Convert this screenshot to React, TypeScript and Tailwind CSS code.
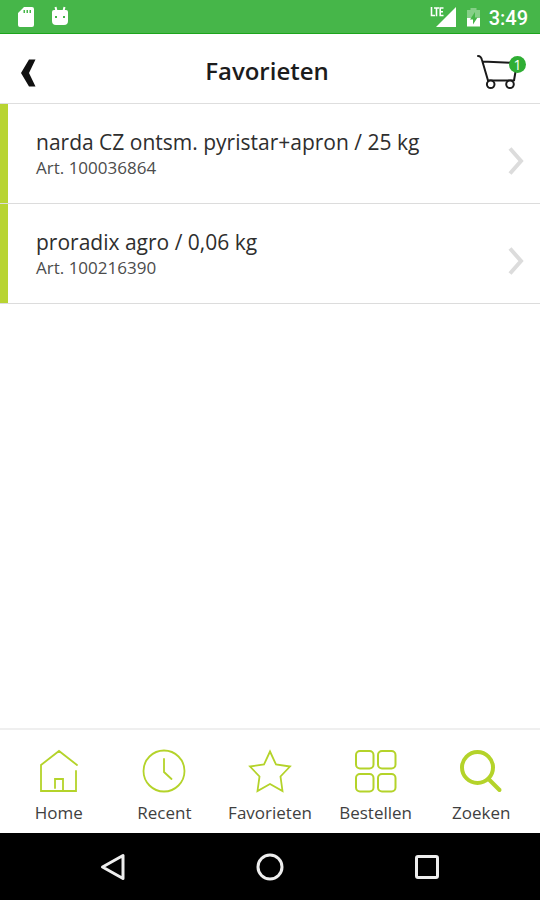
import type { ReactNode } from "react";

type Artikel = {
  naam: string;
  nummer: string;
};

const artikelen: Artikel[] = [
  { naam: "narda CZ ontsm. pyristar+apron / 25 kg", nummer: "100036864" },
  { naam: "proradix agro / 0,06 kg", nummer: "100216390" },
];

const tabs: { label: string; icon: ReactNode }[] = [
  {
    label: "Home",
    icon: (
      <path d="M40 17 L22 3 L4 17 V43 H39 V23 M18 40 V31 H26 V43" strokeWidth="1.8" />
    ),
  },
  {
    label: "Recent",
    icon: (
      <>
        <circle cx="22" cy="23" r="20.5" strokeWidth="1.8" />
        <path d="M22 11 V24 L29.5 31" strokeWidth="1.8" />
      </>
    ),
  },
  {
    label: "Favorieten",
    icon: (
      <path
        d="M22 3.5 L28 16.5 L42 18.5 L32.5 28.5 L34.5 43 L22 36 L9.5 43 L11.5 28.5 L2 18.5 L16 16.5 Z"
        strokeWidth="1.8"
      />
    ),
  },
  {
    label: "Bestellen",
    icon: (
      <>
        <rect x="2" y="3" width="17.5" height="17.5" rx="4" strokeWidth="2" />
        <rect x="24" y="3" width="17.5" height="17.5" rx="4" strokeWidth="2" />
        <rect x="2" y="26" width="17.5" height="17.5" rx="4" strokeWidth="2" />
        <rect x="24" y="26" width="17.5" height="17.5" rx="4" strokeWidth="2" />
      </>
    ),
  },
  {
    label: "Zoeken",
    icon: (
      <>
        <circle cx="18.5" cy="19.5" r="15.5" strokeWidth="4" />
        <path d="M29.5 31 L40.5 42" strokeWidth="4" />
      </>
    ),
  },
];

function StatusBar() {
  return (
    <div className="flex h-[34px] items-center justify-between border-b border-[#1ca51c] bg-[#46b649] pl-[17px] pr-3 text-white">
      <div className="flex items-center gap-4">
        <svg className="h-[22px] w-[18px]" viewBox="0 0 18 22" fill="currentColor" aria-hidden="true">
          <path
            fillRule="evenodd"
            d="M7 1 H15 Q17 1 17 3 V19 Q17 21 15 21 H3 Q1 21 1 19 V7 Z M6.5 4 V7 H8 V4 Z M9.5 4 V7 H11 V4 Z M12.5 4 V7 H14 V4 Z"
          />
        </svg>
        <svg className="h-[22px] w-[18px]" viewBox="0 0 18 22" fill="currentColor" aria-hidden="true">
          <path
            fillRule="evenodd"
            d="M1 6 Q1 4 3 4 H15 Q17 4 17 6 V15 Q17 19 13 19 H5 Q1 19 1 15 Z M4 10 H6 V12 H4 Z M12 10 H14 V12 H12 Z"
          />
          <path d="M5.5 5 L4.5 1 M12.5 5 L13.5 1" stroke="currentColor" strokeWidth="2" />
        </svg>
      </div>
      <div className="flex items-center">
        <svg className="mr-[10px] h-5 w-[26px]" viewBox="0 0 26 20" fill="currentColor" aria-hidden="true">
          <path d="M26 0 V20 H6 Z" />
          <path
            d="M1.5 0 V8.5 H5 M4 1 H9 M6.5 1 V9.3 M13.5 1 H10.2 V8.5 H13.5 M10.2 4.8 H13"
            fill="none"
            stroke="currentColor"
            strokeWidth="1.6"
          />
        </svg>
        <svg className="mr-2 h-5 w-[15px]" viewBox="0 0 15 20" aria-hidden="true">
          <path d="M1 11 V3 H4.5 V1 H10.5 V3 H14 V11 Z" fill="#fff" opacity=".35" />
          <path d="M1 11 H14 V19.5 H1 Z" fill="#fff" />
          <path d="M9 5 L4 12.5 H7 V17.5 L11.5 10.5 H9 Z" fill="#46b649" />
        </svg>
        <span className="pt-[2px] font-['Roboto',sans-serif] text-[20px] font-medium leading-6">3:49</span>
      </div>
    </div>
  );
}

function Header() {
  return (
    <header className="grid h-[70px] grid-cols-[66px_1fr_72px] items-center border-b border-[#dedede]">
      <button type="button" aria-label="Terug" className="flex h-full items-center pl-[21px] pt-2">
        <svg className="h-7 w-[15px]" viewBox="0 0 15 28" fill="#111" aria-hidden="true">
          <path d="M8 0.5 H14.5 L8 14 L14.5 27.5 H8 L0 14 Z" />
        </svg>
      </button>
      <h1 className="pt-1 text-center text-[24px] font-semibold leading-8 text-[#1c1c1c]">
        Favorieten
      </h1>
      <button type="button" aria-label="Winkelwagen, 1 artikel" className="relative flex h-full items-center pl-2 pt-[6px]">
        <svg
          className="h-9 w-[42px]"
          viewBox="0 0 42 36"
          fill="none"
          stroke="#1a1a1a"
          strokeWidth="2"
          strokeLinecap="round"
          strokeLinejoin="round"
          aria-hidden="true"
        >
          <path d="M2 2 Q5 2 6 6 L12 26.5 H38 L41 9 L6.5 7.5" />
          <circle cx="14.7" cy="30.3" r="3.8" fill="#fff" />
          <circle cx="34" cy="30.3" r="3.8" fill="#fff" />
        </svg>
        <span className="absolute right-[14px] top-[22px] flex size-[17px] items-center justify-center rounded-full bg-[#2fae34] text-[14px] leading-4 text-white">
          1
        </span>
      </button>
    </header>
  );
}

function ArtikelRij({ naam, nummer }: Artikel) {
  return (
    <li className="border-b border-[#dcdcdc]">
      <a
        href="#"
        className="flex h-[99px] items-center justify-between border-l-8 border-[#b8d432] pl-7 pr-4"
      >
        <span className="flex flex-col">
          <span className="text-[21px] leading-7 text-[#2e2e2e]">{naam}</span>
          <span className="text-[17px] leading-6 text-[#4c4c4c]">Art. {nummer}</span>
        </span>
        <svg
          className="mt-[14px] h-7 w-4 shrink-0"
          viewBox="0 0 16 28"
          fill="none"
          stroke="#dcdcdc"
          strokeWidth="4"
          aria-hidden="true"
        >
          <path d="M2 1.5 L13 14 L2 26.5" />
        </svg>
      </a>
    </li>
  );
}

function TabBar() {
  return (
    <nav className="grid grid-cols-5 border-t-2 border-[#efefef] px-[6px] pb-2 pt-[18px]">
      {tabs.map((tab) => (
        <button key={tab.label} type="button" className="flex flex-col items-center gap-[7px]">
          <svg
            className="h-[46px] w-11"
            viewBox="0 0 44 46"
            fill="none"
            stroke="#b4d32a"
            strokeLinecap="round"
            aria-hidden="true"
          >
            {tab.icon}
          </svg>
          <span className="text-[17px] leading-6 text-[#3f3f3f]">{tab.label}</span>
        </button>
      ))}
    </nav>
  );
}

function SystemNav() {
  return (
    <div className="grid h-[67px] grid-cols-3 bg-black px-[34px]">
      <button type="button" aria-label="Vorige" className="flex items-center justify-center">
        <svg className="h-7 w-7" viewBox="0 0 28 28" fill="none" stroke="#eee" strokeWidth="3" strokeLinejoin="round" aria-hidden="true">
          <path d="M24 2.5 V25.5 L3.5 14 Z" />
        </svg>
      </button>
      <button type="button" aria-label="Startscherm" className="flex items-center justify-center">
        <svg className="h-7 w-7" viewBox="0 0 28 28" fill="none" stroke="#eee" strokeWidth="3" aria-hidden="true">
          <circle cx="14" cy="14" r="12" />
        </svg>
      </button>
      <button type="button" aria-label="Overzicht" className="flex items-center justify-center">
        <svg className="h-7 w-7" viewBox="0 0 28 28" fill="none" stroke="#eee" strokeWidth="3" aria-hidden="true">
          <rect x="3.5" y="3.5" width="21" height="21" rx="1.5" />
        </svg>
      </button>
    </div>
  );
}

export default function App() {
  return (
    <div className="flex min-h-screen flex-col bg-white font-['Open_Sans',sans-serif]">
      <StatusBar />
      <Header />
      <main className="flex-1">
        <ul>
          {artikelen.map((artikel) => (
            <ArtikelRij key={artikel.nummer} {...artikel} />
          ))}
        </ul>
      </main>
      <TabBar />
      <SystemNav />
    </div>
  );
}
